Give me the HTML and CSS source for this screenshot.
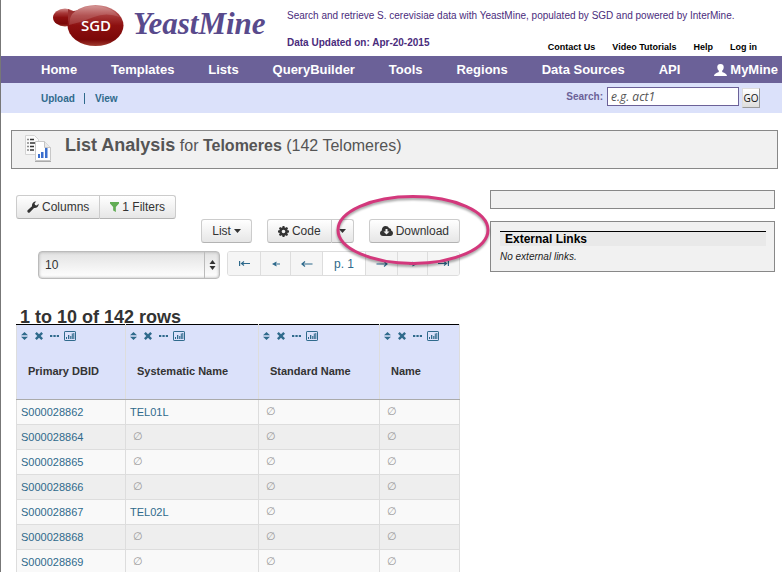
FILE: index.html
```html
<!DOCTYPE html>
<html lang="en">
<head>
<meta charset="utf-8">
<title>YeastMine: List Analysis</title>
<link rel="stylesheet" href="styles.css">
</head>
<body>
<svg class="defs" width="0" height="0" aria-hidden="true">
  <symbol id="i-sort" viewBox="0 0 7 8"><path d="M3.500 0L7 3.300H0zM0 4.700h7L3.500 8z"/></symbol>
  <symbol id="i-x" viewBox="0 0 8 8"><path d="M0 1.700L1.700 0 4 2.200 6.300 0 8 1.700 5.700 4 8 6.300 6.300 8 4 5.800 1.700 8 0 6.300 2.300 4z"/></symbol>
  <symbol id="i-dots" viewBox="0 0 9 3"><path d="M0 0h2.300v2H0zM3.400 0h2.300v2H3.400zM6.800 0h2.200v2H6.800z"/></symbol>
  <symbol id="i-chart" viewBox="0 0 12 10"><rect x=".5" y=".5" width="11" height="9" rx=".6" fill="none" stroke="currentColor"/><path d="M2 6h1v2H2zM4 4h1.300v4H4zM6.200 5h1.100v3H6.200zM7.800 2.500h1v5.500h-1zM9.300 2h1v6h-1z"/></symbol>
  <symbol id="i-left" viewBox="0 0 12 7"><path d="M4 1.500L1 4l3 2.500M1 4h10.500" fill="none" stroke="currentColor" stroke-width="1.200"/></symbol>
  <symbol id="i-short" viewBox="0 0 8 7"><path d="M4.500 1.500L0 4l4.500 2.500zM4 3.400h4v1.200H4z"/></symbol>
  <symbol id="i-first" viewBox="0 0 11 7"><path d="M.6 1v5M5 1.500L2.500 3.500 5 5.500M2.500 3.500H11" fill="none" stroke="currentColor" stroke-width="1.200"/></symbol>
  <symbol id="i-caret" viewBox="0 0 7 4"><path d="M0 0h7L3.500 4z"/></symbol>
</svg>

<header class="top">
  <a class="brand" href="#">
    <svg width="72" height="42" viewBox="0 0 72 42" role="img" aria-label="SGD">
      <defs>
        <linearGradient id="cell" x1="0" y1="0" x2="0" y2="1">
          <stop offset="0" stop-color="#d08a8a"/><stop offset=".25" stop-color="#a83a3a"/>
          <stop offset=".5" stop-color="#8d1010"/><stop offset=".85" stop-color="#7b0808"/><stop offset="1" stop-color="#a03c30"/>
        </linearGradient>
      </defs>
      <ellipse cx="13" cy="12.500" rx="12" ry="9" fill="url(#cell)"/>
      <path d="M16 4Q21 8 28 4L26 18Q21 17 16 20z" fill="#9c3030"/>
      <ellipse cx="43.500" cy="20.500" rx="28" ry="20.500" fill="url(#cell)"/>
      <path d="M20 9Q28 1 43 1t25 11Q54 7 42 12T17 20Q17 14 20 9z" fill="#fff" opacity=".14"/>
      <text class="sgd" x="44" y="26" text-anchor="middle">SGD</text>
    </svg>
    <span class="wordmark">YeastMine</span>
  </a>
  <div class="about">
    <p class="tagline">Search and retrieve S. cerevisiae data with YeastMine, populated by SGD and powered by InterMine.</p>
    <div class="meta">
      <strong class="updated">Data Updated on: Apr-20-2015</strong>
      <nav class="links"><a href="#">Contact Us</a><a href="#">Video Tutorials</a><a href="#">Help</a><a href="#">Log in</a></nav>
    </div>
  </div>
</header>

<nav class="mainnav">
  <a href="#">Home</a><a href="#">Templates</a><a href="#">Lists</a><a href="#">QueryBuilder</a><a href="#">Tools</a><a href="#">Regions</a><a href="#">Data Sources</a><a href="#">API</a>
  <a href="#" class="mine"><svg width="13" height="12" viewBox="0 0 13 12"><path d="M6.500 0C8.900 0 10 1.600 9.700 3.600 9.600 5.200 9 6 8.200 6.800v1.100c1.200.6 4.400 1.200 4.800 4.100H0c.4-2.900 3.600-3.500 4.800-4.100V6.800C4 6 3.400 5.200 3.300 3.600 3 1.600 4.100 0 6.500 0z"/></svg>MyMine</a>
</nav>

<div class="subnav">
  <nav class="sublinks"><a href="#">Upload</a><a href="#">View</a></nav>
  <form class="search">
    <label for="q">Search:</label>
    <input id="q" type="text" placeholder="e.g. act1">
    <button type="button">GO</button>
  </form>
</div>

<section class="titlebar">
  <svg width="27" height="28" viewBox="0 0 27 28" aria-hidden="true">
    <path d="M.5.500h9l4 4v15h-13z" fill="#fafafa" stroke="#d4d4d4"/>
    <path d="M2 4.500h2M2 8h2M2 11.500h2M2 15h2" stroke="#888" stroke-width="1.300"/>
    <path d="M5 4.500h4M5 8h5M5 11.500h4M5 15h4" stroke="#333" stroke-width="1.500"/>
    <path d="M10.500 6.500h9l6 6v13h-15z" fill="#fff" stroke="#c8c8c8"/>
    <path d="M19.500 6.500v6h6" fill="#e8e8e8" stroke="#c4c4c4"/>
    <path d="M10 26.500h16" stroke="#aaa"/>
    <path d="M13 19h2v4h-2zM16 17h2.500v6H16zM20 13h2.500v10H20z" fill="#3b6fce"/>
  </svg>
  <h1><strong>List Analysis</strong> for <b>Telomeres</b> (142 Telomeres)</h1>
</section>

<main class="content">
  <section class="results">
    <div class="group">
      <button class="btn"><svg width="12" height="12" viewBox="0 0 12 12"><path d="M.6 9.300L5 5.200C4.600 2.500 6.500.2 9.300.5L7.600 2.300l.4 1.800 1.800.4 1.800-1.800C12 5.300 9.700 7.400 7 7L2.700 11.400C1.300 12.300-.3 10.700.6 9.300z"/></svg>Columns</button><button class="btn"><svg class="green" width="9" height="10" viewBox="0 0 10 10" preserveAspectRatio="none"><path d="M0 0h10v1.500L6.500 5v5L3.500 8.500V5L0 1.500z"/></svg>1 Filters</button>
    </div>
    <div class="actions">
      <button class="btn">List<svg width="7" height="4"><use href="#i-caret"/></svg></button>
      <div class="group">
        <button class="btn"><svg width="11" height="11" viewBox="0 0 12 12"><path fill-rule="evenodd" d="M5 0h2l.3 1.500 1 .4L9.600 1 11 2.400l-.9 1.300.4 1L12 5v2l-1.500.3-.4 1 .9 1.300L9.600 11l-1.300-.9-1 .4L7 12H5l-.3-1.500-1-.4L2.400 11 1 9.600l.9-1.300-.4-1L0 7V5l1.500-.3.4-1L1 2.400 2.400 1l1.300.9 1-.4zM6 4a2 2 0 100 4 2 2 0 000-4z"/></svg>Code</button><button class="btn toggle" aria-label="Code options"><svg width="7" height="4"><use href="#i-caret"/></svg></button>
      </div>
      <button class="btn"><svg width="13" height="10" viewBox="0 0 13 10"><path fill-rule="evenodd" d="M3 10C1.200 10 0 8.700 0 7.200 0 5.900.8 4.900 1.800 4.500 1.700 1.900 3.300 0 5.600 0c1.700 0 2.900.8 3.400 2.200 1.400-.2 2.400.9 2.100 2.300C12.300 4.900 13 5.900 13 7.200 13 8.700 11.800 10 10.200 10zM5.500 3v2.500h-2l3 3 3-3h-2V3z"/></svg>Download</button>
    </div>
    <div class="paging">
      <div class="sizer">
        <select aria-label="Rows per page"><option>10</option></select>
        <svg width="7" height="10" viewBox="0 0 7 10"><path d="M3.500 0L6.500 4h-6zM.5 6h6l-3 4z"/></svg>
      </div>
      <div class="pager">
        <button aria-label="First page"><svg width="11" height="7"><use href="#i-first"/></svg></button>
        <button class="narrow" aria-label="Back several pages"><svg width="8" height="7"><use href="#i-short"/></svg></button>
        <button aria-label="Previous page"><svg width="12" height="7"><use href="#i-left"/></svg></button>
        <button class="current">p. 1</button>
        <button aria-label="Next page"><svg class="flip" width="12" height="7"><use href="#i-left"/></svg></button>
        <button class="narrow" aria-label="Forward several pages"><svg class="flip" width="8" height="7"><use href="#i-short"/></svg></button>
        <button aria-label="Last page"><svg class="flip" width="11" height="7"><use href="#i-first"/></svg></button>
      </div>
      <svg class="ring" width="160" height="80" viewBox="0 0 160 80" aria-hidden="true"><ellipse cx="80" cy="38" rx="75" ry="33.500"/></svg>
    </div>
    <h2>1 to 10 of 142 rows</h2>
    <table>
      <colgroup><col class="c-id"><col class="c-sys"><col class="c-std"><col class="c-name"></colgroup>
      <thead><tr>
        <th><div class="tools"><svg width="7" height="8"><use href="#i-sort"/></svg><svg width="8" height="8"><use href="#i-x"/></svg><svg width="9" height="3"><use href="#i-dots"/></svg><svg width="12" height="10"><use href="#i-chart"/></svg></div><span>Primary DBID</span></th>
        <th><div class="tools"><svg width="7" height="8"><use href="#i-sort"/></svg><svg width="8" height="8"><use href="#i-x"/></svg><svg width="9" height="3"><use href="#i-dots"/></svg><svg width="12" height="10"><use href="#i-chart"/></svg></div><span>Systematic Name</span></th>
        <th><div class="tools"><svg width="7" height="8"><use href="#i-sort"/></svg><svg width="8" height="8"><use href="#i-x"/></svg><svg width="9" height="3"><use href="#i-dots"/></svg><svg width="12" height="10"><use href="#i-chart"/></svg></div><span>Standard Name</span></th>
        <th><div class="tools"><svg width="7" height="8"><use href="#i-sort"/></svg><svg width="8" height="8"><use href="#i-x"/></svg><svg width="9" height="3"><use href="#i-dots"/></svg><svg width="12" height="10"><use href="#i-chart"/></svg></div><span>Name</span></th>
      </tr></thead>
      <tbody>
        <tr><td><a href="#">S000028862</a></td><td><a href="#">TEL01L</a></td><td class="nil">∅</td><td class="nil">∅</td></tr>
        <tr><td><a href="#">S000028864</a></td><td class="nil">∅</td><td class="nil">∅</td><td class="nil">∅</td></tr>
        <tr><td><a href="#">S000028865</a></td><td class="nil">∅</td><td class="nil">∅</td><td class="nil">∅</td></tr>
        <tr><td><a href="#">S000028866</a></td><td class="nil">∅</td><td class="nil">∅</td><td class="nil">∅</td></tr>
        <tr><td><a href="#">S000028867</a></td><td><a href="#">TEL02L</a></td><td class="nil">∅</td><td class="nil">∅</td></tr>
        <tr><td><a href="#">S000028868</a></td><td class="nil">∅</td><td class="nil">∅</td><td class="nil">∅</td></tr>
        <tr><td><a href="#">S000028869</a></td><td class="nil">∅</td><td class="nil">∅</td><td class="nil">∅</td></tr>
      </tbody>
    </table>
  </section>
  <aside class="side">
    <div class="panel blank"></div>
    <div class="panel">
      <h3>External Links</h3>
      <p>No external links.</p>
    </div>
  </aside>
</main>
</body>
</html>
```
FILE: styles.css
```css
* { box-sizing: border-box; }
html { border-left: 1px solid #777; min-height: 100%; background: #fff; }
body { margin: 0; font-family: "Liberation Sans", Arial, sans-serif; font-size: 12px; color: #333; }
a { text-decoration: none; color: inherit; }
button, input, select { font: inherit; color: inherit; margin: 0; }
svg { display: block; flex: none; fill: currentColor; }
.defs { position: absolute; }
h1, h2, h3, p { margin: 0; }

.top { display: flex; height: 56px; }
.brand { display: flex; flex: none; width: 286px; padding: 5px 0 0 51px; gap: 9px; }
.sgd { font: 600 15px "Open Sans", sans-serif; fill: #fff; }
.wordmark { font: italic bold 31px/38px "Liberation Serif", serif; color: #594a8c; }
.about { flex: 1; color: #4a2c7c; }
.tagline { font-size: 10px; line-height: 12px; padding-top: 10px; white-space: nowrap; }
.meta { display: flex; justify-content: space-between; padding: 15px 25px 0 0; line-height: 12px; }
.updated { font-size: 10px; }
.links { display: flex; gap: 17px; padding-top: 4px; font-size: 9px; font-weight: bold; color: #000; }

.mainnav { display: flex; justify-content: space-between; align-items: center; height: 27px; padding: 0 4px 0 40px; background: #6b6198; color: #fff; font-size: 13px; font-weight: bold; }
.mine { display: flex; align-items: center; gap: 3px; }

.subnav { display: flex; justify-content: space-between; height: 30px; padding: 4px 22px 0 40px; background: #dbe1fa; font-size: 10px; font-weight: bold; }
.sublinks { display: flex; align-items: center; height: 22px; color: #2f6a8c; }
.sublinks a + a { margin-left: 9px; padding-left: 10px; border-left: 1px solid #2f6a8c; }
.search { display: flex; color: #6b6198; }
.search label { line-height: 20px; margin-right: 4px; }
.search input { width: 132px; height: 19px; padding: 0 3px; border: 1px solid #6b6198; background: #fff; color: #333; font: italic 12px "Open Sans", sans-serif; }
.search input::placeholder { color: #555; opacity: 1; }
.search button { width: 18px; height: 20px; margin: 1px 0 0 3px; padding: 0; border: 1px solid #999; border-top-color: #ddd; border-left-color: #ddd; background: linear-gradient(#fff, #ddd); color: #111; font: 10px "Open Sans", sans-serif; }

.titlebar { display: flex; gap: 13px; height: 39px; margin: 17px 4px 0 10px; padding: 4px 13px; border: 1px solid #888; background: #f1f1f1; color: #555; }
.titlebar h1 { font-size: 16px; line-height: 20px; font-weight: normal; }
.titlebar strong { font-size: 18px; }

.content { display: grid; grid-template-columns: 1fr 285px; gap: 30px; padding: 21px 7px 0 15px; }
.results { padding-top: 5px; }
.group, .actions { display: flex; }
.actions { justify-content: flex-end; gap: 15px; }
.btn { display: flex; align-items: center; gap: 3px; height: 24px; padding: 0 10px; border: 1px solid #ccc; border-bottom-color: #b3b3b3; border-radius: 3px; background: linear-gradient(#fff, #e6e6e6); }
.group .btn:first-child { border-radius: 3px 0 0 3px; }
.group .btn:last-child { border-left: 0; border-radius: 0 3px 3px 0; }
.btn.toggle { padding: 0 7px; }
.green { color: #62ad55; }
.paging { position: relative; display: flex; gap: 7px; padding: 8px 0 0 22px; }
.sizer { position: relative; flex: 1; height: 28px; }
.sizer select { width: 100%; height: 28px; padding: 0 6px; appearance: none; border: 1px solid #bbb; border-radius: 4px; background: linear-gradient(#e2e2e2, #fff); box-shadow: inset 0 0 3px #aaa; }
.sizer svg { position: absolute; right: 0; top: 0; width: 16px; height: 28px; padding: 9px 4px; border-left: 1px solid #bbb; }
.pager { display: flex; height: 25px; border: 1px solid #ddd; border-radius: 3px; overflow: hidden; color: #2f6a8c; }
.pager button { display: flex; align-items: center; justify-content: center; width: 32px; padding: 0; border: 0; background: #f5f5f5; }
.pager button + button { border-left: 1px solid #ddd; }
.pager .narrow { width: 30px; }
.pager .current { width: 43px; background: #fff; }
.flip { transform: scaleX(-1); }
.ring { position: absolute; right: -33px; top: -51px; pointer-events: none; overflow: visible; filter: drop-shadow(0 2px 1px rgba(0, 0, 0, .35)); }
.ring ellipse { fill: none; stroke: #d3387c; stroke-width: 3; }

h2 { padding-left: 4px; margin-top: 29px; font-size: 18px; line-height: 16px; height: 16px; padding-top: 1px; }
table { width: 100%; table-layout: fixed; border-collapse: collapse; border-top: 1px solid #000; font-size: 11px; }
.c-id { width: 109px; }
.c-sys { width: 133px; }
.c-std { width: 121px; }
th { height: 75px; padding: 0; border: 1px solid #ddd; border-top-color: #000; border-bottom: 1px solid #aaa; background: #dbe1fa; text-align: left; vertical-align: top; }
th span { display: block; padding: 17px 0 0 11px; line-height: 14px; }
.tools { display: flex; align-items: center; gap: 7px; height: 22px; padding-left: 4px; color: #2f6a8c; }
.tools svg:last-child { margin-left: -2px; }
td { height: 25px; padding: 0 4px 1px; border: 1px solid #ddd; background: #f9f9f9; color: #2f6a8c; }
tr:nth-child(even) td { background: #eee; }
td.nil { padding-left: 7px; color: #999; font-size: 11px; }

.side { display: flex; flex-direction: column; gap: 12px; }
.panel { padding: 9px 8px 8px 9px; border: 1px solid #888; background: #f1f1f1; }
.panel.blank { height: 19px; padding: 0; }
.panel h3 { padding-left: 5px; border-top: 1px solid #000; background: #e9e9e9; color: #000; font-size: 12px; line-height: 14px; }
.panel p { padding-top: 5px; font-size: 10px; line-height: 12px; font-style: italic; color: #222; }
```
